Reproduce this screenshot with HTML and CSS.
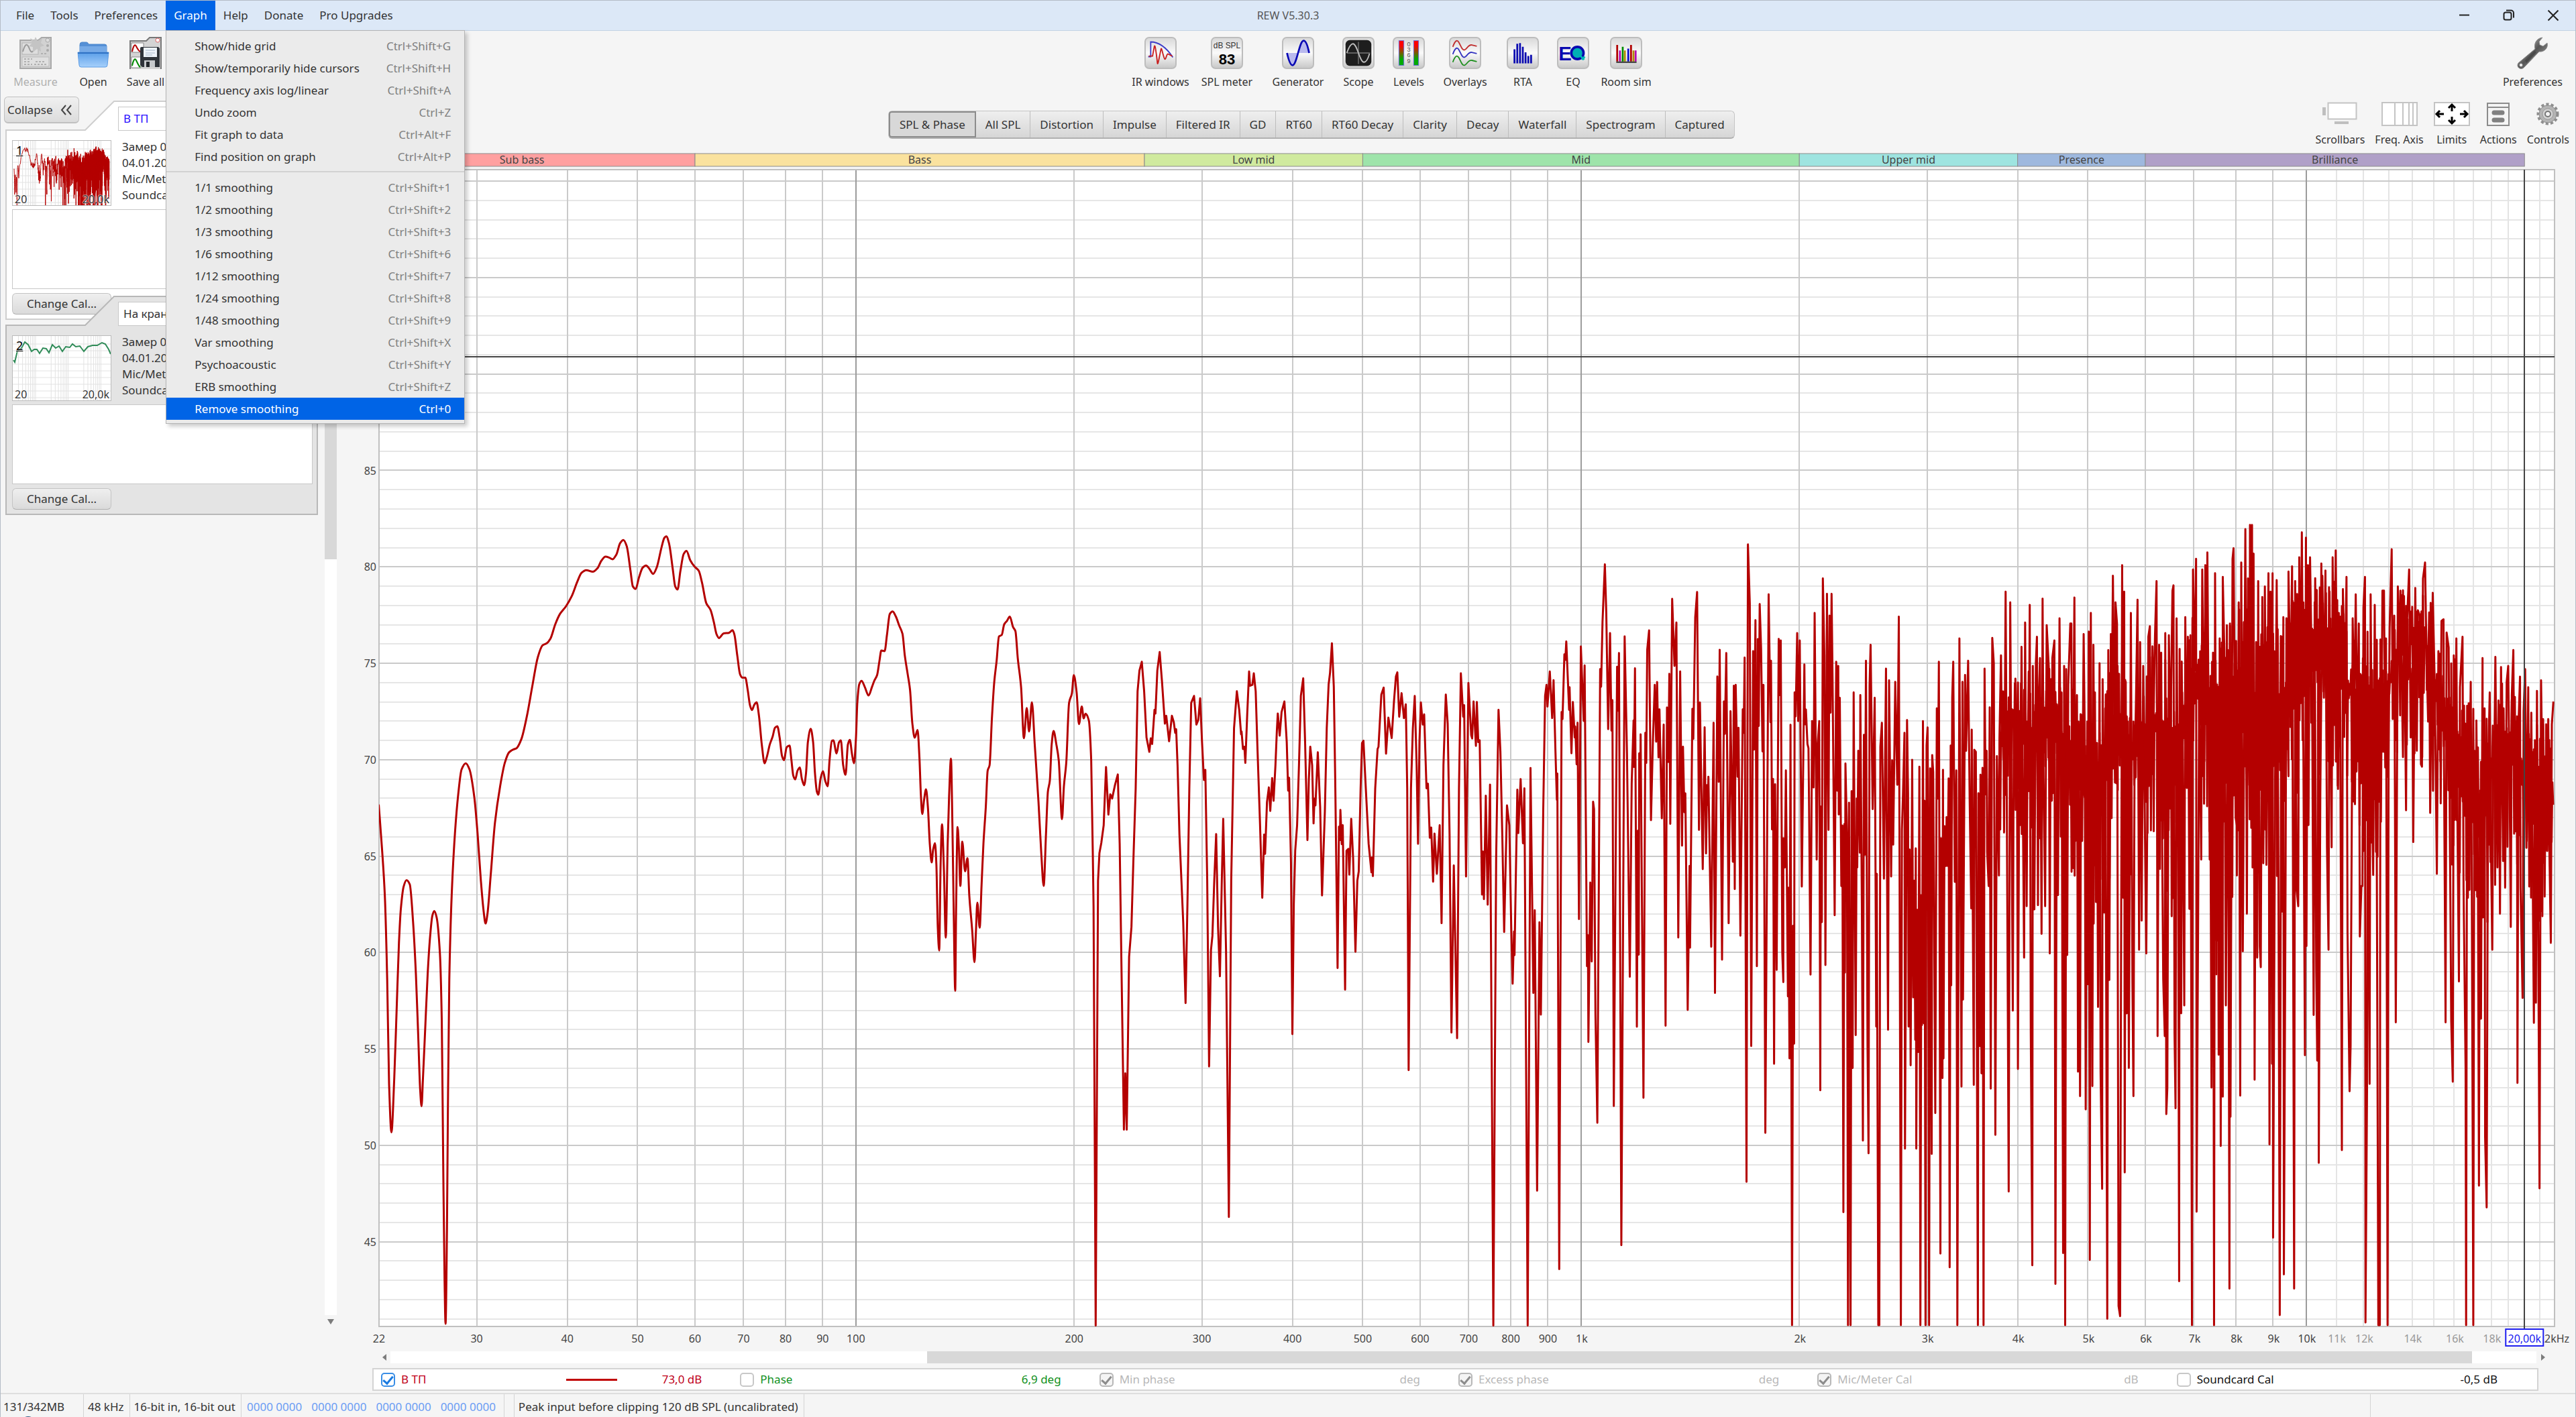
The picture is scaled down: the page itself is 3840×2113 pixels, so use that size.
FILE: index.html
```html
<!DOCTYPE html>
<html lang="en">
<head>
    <meta charset="UTF-8">
    <meta name="viewport" content="width=device-width, initial-scale=1.0">
    <title>REW V5.30.3</title>
    <link rel="stylesheet" href="styles.css">
</head>
<body>

    <header class="titlebar">
        <nav class="menubar">
            <button type="button">File</button>
            <button type="button">Tools</button>
            <button type="button">Preferences</button>
            <div class="menu-holder">
                <button type="button" class="open" aria-expanded="true">Graph</button>
                <ul class="menu" id="graphMenu">
                    <li><button type="button"><span>Show/hide grid</span><kbd>Ctrl+Shift+G</kbd></button></li>
                    <li><button type="button"><span>Show/temporarily hide cursors</span><kbd>Ctrl+Shift+H</kbd></button></li>
                    <li><button type="button"><span>Frequency axis log/linear</span><kbd>Ctrl+Shift+A</kbd></button></li>
                    <li><button type="button"><span>Undo zoom</span><kbd>Ctrl+Z</kbd></button></li>
                    <li><button type="button"><span>Fit graph to data</span><kbd>Ctrl+Alt+F</kbd></button></li>
                    <li><button type="button"><span>Find position on graph</span><kbd>Ctrl+Alt+P</kbd></button></li>
                    <li class="separator"></li>
                    <li><button type="button"><span>1/1 smoothing</span><kbd>Ctrl+Shift+1</kbd></button></li>
                    <li><button type="button"><span>1/2 smoothing</span><kbd>Ctrl+Shift+2</kbd></button></li>
                    <li><button type="button"><span>1/3 smoothing</span><kbd>Ctrl+Shift+3</kbd></button></li>
                    <li><button type="button"><span>1/6 smoothing</span><kbd>Ctrl+Shift+6</kbd></button></li>
                    <li><button type="button"><span>1/12 smoothing</span><kbd>Ctrl+Shift+7</kbd></button></li>
                    <li><button type="button"><span>1/24 smoothing</span><kbd>Ctrl+Shift+8</kbd></button></li>
                    <li><button type="button"><span>1/48 smoothing</span><kbd>Ctrl+Shift+9</kbd></button></li>
                    <li><button type="button"><span>Var smoothing</span><kbd>Ctrl+Shift+X</kbd></button></li>
                    <li><button type="button"><span>Psychoacoustic</span><kbd>Ctrl+Shift+Y</kbd></button></li>
                    <li><button type="button"><span>ERB smoothing</span><kbd>Ctrl+Shift+Z</kbd></button></li>
                    <li><button type="button" class="active"><span>Remove smoothing</span><kbd>Ctrl+0</kbd></button></li>
                </ul>
            </div>
            <button type="button">Help</button>
            <button type="button">Donate</button>
            <button type="button">Pro Upgrades</button>
        </nav>
        <h1>REW V5.30.3</h1>
        <div class="window-buttons">
            <button type="button" aria-label="Minimize"><svg width="18" height="18" viewBox="0 0 18 18"><path d="M1 8.500h15"/></svg></button>
            <button type="button" aria-label="Restore"><svg width="18" height="18" viewBox="0 0 18 18"><rect x="1.500" y="4.500" width="11" height="11" rx="2.500"/><path d="M5 1.500h7a4 4 0 0 1 4 4v7"/></svg></button>
            <button type="button" aria-label="Close"><svg width="18" height="18" viewBox="0 0 18 18"><path d="M1.500 1.500l15 15M16.500 1.500l-15 15"/></svg></button>
        </div>
    </header>

    <div class="toolbar">
        <div class="file-tools">
            <button type="button" class="tool" disabled>
                <svg width="48" height="48" viewBox="0 0 48 48"><path d="M1 5h27l5-4h14v46H1z" fill="#d2d2d2" stroke="#a8a8a8" stroke-width="2"/><rect x="4" y="9" width="24" height="17" fill="#dedede" stroke="#b4b4b4"/><path d="M5 22c4-14 7-12 10-4s6 4 9-4" fill="none" stroke="#9a9a9a" stroke-width="2"/><rect x="4" y="30" width="40" height="14" fill="#e0e0e0" stroke="#bbb"/><path d="M7 33h12M7 37h10M7 41h12M24 37h14M22 41h20M32 25h8" stroke="#b0b0b0" stroke-width="2" stroke-dasharray="3 2"/><path d="M24 0l3 6 7-4-2 7 5 4-6 2 1 7-6-4-6 5v-8l-6-1 5-5-3-7 6 3z" fill="#c4c4c4"/><circle cx="42" cy="5" r="3" fill="#ddd" stroke="#aaa"/><circle cx="42" cy="13" r="2" fill="#aaa"/><circle cx="42" cy="20" r="2" fill="#aaa"/></svg>
                <span>Measure</span>
            </button>
            <button type="button" class="tool">
                <svg width="48" height="48" viewBox="0 0 48 48"><path d="M4 12q0-4 3-4h7q2 0 3 3h24q3 0 3 3v12H4z" fill="#5590d6" stroke="#4b86cc"/><path d="M4 14h40v10H4z" fill="#76aae6"/><path d="M1 23h46l-2 19q0 3-3 3H6q-3 0-3-3z" fill="url(#folder)" stroke="#5c9be4"/><path d="M1 24h46" stroke="#2f72c4" stroke-width="2"/><defs><linearGradient id="folder" x2="0" y2="1"><stop offset="0" stop-color="#5a9ee8"/><stop offset="1" stop-color="#a6d0fb"/></linearGradient></defs></svg>
                <span>Open</span>
            </button>
            <button type="button" class="tool">
                <svg width="48" height="48" viewBox="0 0 48 48"><path d="M1 48V6h24l5-5h17v47" fill="#d4d4d4" stroke="#777" stroke-width="2"/><path d="M3 9h18v14H3zM3 30h14v16H3z" fill="#fff" stroke="#888"/><path d="M4 22c2-9 4-12 6-8s4 7 6 8" fill="none" stroke="#b40000" stroke-width="2"/><path d="M4 43c2-9 4-12 6-8s4 9 6 10" fill="none" stroke="#008a00" stroke-width="2"/><circle cx="42" cy="5" r="3" fill="#fff" stroke="#d66"/><path d="M16 17q0-2 2-2h25l2 2v28H19l-3-3z" fill="#2f343a"/><rect x="21" y="16" width="20" height="14" fill="#eef4fb"/><path d="M24 20h14M24 24h14M24 27h10" stroke="#a6b6c8"/><path d="M22 35h16v10H22z" fill="#c6c9cc"/><path d="M25 37h5v8h-5z" fill="#24282c"/></svg>
                <span>Save all</span>
            </button>
        </div>
        <div class="main-tools">
            <button type="button" class="tool">
                <svg class="tile" width="48" height="48" viewBox="0 0 48 48"><path d="M4 30h4V6c14 0 26 10 36 25" fill="none" stroke="#3c3cc8" stroke-width="2"/><path d="M5 29h6l3-16c1-2 2 2 5 28 1 4 5-22 6-24s4 16 6 17 3-11 6-8l6 3" fill="none" stroke="#c81e1e" stroke-width="2"/></svg>
                <span>IR windows</span>
            </button>
            <button type="button" class="tool">
                <svg class="tile" width="48" height="48" viewBox="0 0 48 48"><text x="24" y="16" class="meter-unit">dB SPL</text><text x="24" y="42" class="meter-value">83</text></svg>
                <span>SPL meter</span>
            </button>
            <button type="button" class="tool">
                <svg class="tile" width="48" height="48" viewBox="0 0 48 48"><path d="M6 24c3 13 6 20 9 20s6-8 9-20zM24 24c4-16 6-20 9-20s6 8 9 20z" fill="#b9b9ee"/><path d="M6 24c3 13 6 20 9 20 7 0 11-40 18-40 4 0 7 10 9 20" fill="none" stroke="#0a0ab4" stroke-width="3"/></svg>
                <span>Generator</span>
            </button>
            <button type="button" class="tool">
                <svg class="tile" width="48" height="48" viewBox="0 0 48 48"><rect x="3" y="3" width="42" height="42" rx="7" fill="#1e1e1e"/><path d="M5 24h38M24 6v36" stroke="#606060" stroke-width="2"/><path d="M5 24C9 13 12 9 15 9c7 0 11 30 18 30 4 0 7-7 9-14" fill="none" stroke="#bdbdbd" stroke-width="2"/></svg>
                <span>Scope</span>
            </button>
            <button type="button" class="tool">
                <svg class="tile" width="48" height="48" viewBox="0 0 48 48"><defs><linearGradient id="level" x2="0" y2="1"><stop offset=".2" stop-color="#f00"/><stop offset=".75" stop-color="#00aa00"/></linearGradient></defs><rect x="8" y="4" width="8" height="40" fill="url(#level)" stroke="#6666e0"/><rect x="32" y="4" width="8" height="40" fill="url(#level)" stroke="#6666e0"/><g class="level-text"><text x="24" y="13">0</text><text x="24" y="22">3</text><text x="24" y="31">6</text><text x="24" y="40">9</text></g></svg>
                <span>Levels</span>
            </button>
            <button type="button" class="tool">
                <svg class="tile" width="48" height="48" viewBox="0 0 48 48"><g fill="none" stroke-width="2"><path d="M4 14C8 3 11 2 14 7s5 13 9 12 6-9 12-8l8 2" stroke="#c03030"/><path d="M4 26C8 15 11 14 14 19s5 13 9 12 6-9 12-8l8 2" stroke="#3434c0"/><path d="M4 39C8 28 11 27 14 32s5 13 9 12 6-9 12-8l8 2" stroke="#209020"/></g></svg>
                <span>Overlays</span>
            </button>
            <button type="button" class="tool">
                <svg class="tile" width="48" height="48" viewBox="0 0 48 48"><path d="M10.500 41V18M15 41V9M19.500 41V8M24 41V14M28.500 41V23M33 41V29M37.500 41V27" stroke="#0a0ab0" stroke-width="3"/></svg>
                <span>RTA</span>
            </button>
            <button type="button" class="tool">
                <svg class="tile" width="48" height="48" viewBox="0 0 48 48"><circle cx="31" cy="24" r="10" fill="#00b0b4" stroke="#0a0ab0" stroke-width="4"/><path d="M36 29l6 6M38 35l5-5" stroke="#00b8b8" stroke-width="3"/><text x="11" y="36" class="eq-text">E</text></svg>
                <span>EQ</span>
            </button>
            <button type="button" class="tool">
                <svg class="tile" width="48" height="48" viewBox="0 0 48 48"><g stroke-width="3"><path d="M9.500 38V11M32 38V11" stroke="#b00000"/><path d="M14 38V20M39.500 38V20" stroke="#b400b4"/><path d="M18.500 38V14" stroke="#008a00"/><path d="M22 38V20M36 38V20" stroke="#b08a00"/><path d="M27.500 38V17" stroke="#0a0ac8"/></g><path d="M8 39h33" stroke="#333" stroke-width="2"/></svg>
                <span>Room sim</span>
            </button>
        </div>
        <div class="pref-tools">
            <button type="button" class="tool">
                <svg width="48" height="48" viewBox="0 0 48 48"><defs><linearGradient id="steel" x2="1" y2="1"><stop offset="0" stop-color="#eee"/><stop offset=".5" stop-color="#555"/><stop offset="1" stop-color="#bbb"/></linearGradient></defs><path d="M28 18c-2-8 2-16 11-17l-5 6 1 5 5 2 6-5c2 8-5 14-12 13L12 45c-5 6-13 0-9-6z" fill="url(#steel)" stroke="#8a8a8a"/><path d="M13 35l14-14 3 2-15 16z" fill="#4a4a4a"/><circle cx="7" cy="42" r="2.500" fill="#f5f5f5" stroke="#777"/></svg>
                <span>Preferences</span>
            </button>
        </div>
    </div>

    <div class="workspace">
        <aside class="sidebar">
            <div class="measurements">
                <button type="button" class="collapse">Collapse <svg width="18" height="16" viewBox="0 0 18 16"><path d="M8 1L2 8l6 7M16 1l-6 7 6 7"/></svg></button>

                <section class="card selected">
                    <svg class="card-shape" width="466" height="327" viewBox="0 0 466 327"><path d="M1 326V44H119L162 1H465V326z"/></svg>
                    <input class="card-title" type="text" value="В ТП" aria-label="Measurement 1 name">
                    <div class="card-info">
                        <div class="thumb">
                            <svg id="thumbTrace" width="146" height="96" viewBox="0 0 146 96"></svg>
                            <b>1</b><i class="low">20</i><i class="high">20,0k</i>
                        </div>
                        <p>Замер 04<br>04.01.20<br>Mic/Meter<br>Soundcard</p>
                    </div>
                    <textarea aria-label="Measurement 1 notes"></textarea>
                    <button type="button" class="change-cal">Change Cal...</button>
                </section>

                <section class="card">
                    <svg class="card-shape" width="466" height="327" viewBox="0 0 466 327"><path d="M1 326V44H119L162 1H465V326z"/></svg>
                    <input class="card-title" type="text" value="На кран" aria-label="Measurement 2 name">
                    <div class="card-info">
                        <div class="thumb">
                            <svg id="thumbGreen" width="146" height="96" viewBox="0 0 146 96"><polyline points="1,36 3,39 7,22 13,18 18,9 23,13 28,23 32,20 36,20 40,26 45,18 50,19 54,25 59,13 64,18 69,15 74,23 79,16 85,17 89,12 94,16 100,15 106,23 112,16 119,14 126,14 133,10 138,12 143,20 146,27"/></svg>
                            <b>2</b><i class="low">20</i><i class="high">20,0k</i>
                        </div>
                        <p>Замер 04<br>04.01.20<br>Mic/Meter<br>Soundcard</p>
                    </div>
                    <textarea aria-label="Measurement 2 notes"></textarea>
                    <button type="button" class="change-cal">Change Cal...</button>
                </section>
            </div>
            <div class="vscroll">
                <div class="vtrack"><div class="vthumb"></div></div>
                <svg width="18" height="18" viewBox="0 0 18 18"><path d="M4 6h10l-5 8z"/></svg>
            </div>
        </aside>

        <main class="graph-area">
            <div class="graph-header">
                <div class="tabs">
                    <button type="button" class="current">SPL &amp; Phase</button>
                    <button type="button">All SPL</button>
                    <button type="button">Distortion</button>
                    <button type="button">Impulse</button>
                    <button type="button">Filtered IR</button>
                    <button type="button">GD</button>
                    <button type="button">RT60</button>
                    <button type="button">RT60 Decay</button>
                    <button type="button">Clarity</button>
                    <button type="button">Decay</button>
                    <button type="button">Waterfall</button>
                    <button type="button">Spectrogram</button>
                    <button type="button">Captured</button>
                </div>
                <div class="view-tools">
                    <button type="button" class="tool">
                        <svg width="54" height="38" viewBox="0 0 54 38"><path d="M9.500 2.500h42v24h-42z" fill="#fff" stroke="#c4c4c4" stroke-width="2"/><path d="M1 9h5v12H1zM19 30h21v4H19z" fill="#bfbfbf"/></svg>
                        <span>Scrollbars</span>
                    </button>
                    <button type="button" class="tool">
                        <svg width="54" height="38" viewBox="0 0 54 38"><path d="M1 2h52v34H1zM20 2v34M32 2v34M41 2v34M47 2v34" fill="#fff" stroke="#c4c4c4" stroke-width="2"/></svg>
                        <span>Freq. Axis</span>
                    </button>
                    <button type="button" class="tool">
                        <svg width="54" height="38" viewBox="0 0 54 38"><path d="M1 2h52v34H1z" fill="#fff" stroke="#c4c4c4" stroke-width="2"/><path d="M15 19H5M9 14l-5 5 5 5M39 19h10M45 14l5 5-5 5M27 15V6M22 10l5-5 5 5M27 23v9M22 28l5 5 5-5" fill="none" stroke="#000" stroke-width="3"/></svg>
                        <span>Limits</span>
                    </button>
                    <button type="button" class="tool">
                        <svg width="36" height="38" viewBox="0 0 36 38"><path d="M2 3h32v33H2zM2 9h32" fill="#f5f5f5" stroke="#8c8c8c" stroke-width="2"/><path d="M12 17h12M12 28h12" stroke="#808080" stroke-width="7" stroke-linecap="round"/></svg>
                        <span>Actions</span>
                    </button>
                    <button type="button" class="tool">
                        <svg width="38" height="38" viewBox="0 0 38 38"><circle cx="19" cy="19" r="14" fill="none" stroke="#8e8e8e" stroke-width="5" stroke-dasharray="4 3"/><circle cx="19" cy="19" r="13" fill="#b4b4b4" stroke="#8e8e8e"/><circle cx="19" cy="19" r="8" fill="#d4d4d4" stroke="#9a9a9a"/><circle cx="19" cy="19" r="4" fill="#f5f5f5" stroke="#777" stroke-width="2"/></svg>
                        <span>Controls</span>
                    </button>
                </div>
            </div>

            <svg class="chart" id="chart" role="img" aria-label="SPL graph"></svg>

            <div class="hscroll">
                <svg width="18" height="18" viewBox="0 0 18 18"><path d="M12 4v10L6 9z"/></svg>
                <div class="htrack"><div class="hthumb"></div></div>
                <svg width="18" height="18" viewBox="0 0 18 18"><path d="M7 4v10l6-5z"/></svg>
            </div>

            <div class="legend">
                <div class="trace red"><label><input type="checkbox" checked>В ТП</label><span class="swatch"></span><span class="value">73,0 dB</span></div>
                <div class="trace green"><label><input type="checkbox">Phase</label><span class="value">6,9 deg</span></div>
                <div class="trace off"><label><input type="checkbox" checked disabled>Min phase</label><span class="value">deg</span></div>
                <div class="trace off"><label><input type="checkbox" checked disabled>Excess phase</label><span class="value">deg</span></div>
                <div class="trace off"><label><input type="checkbox" checked disabled>Mic/Meter Cal</label><span class="value">dB</span></div>
                <div class="trace"><label><input type="checkbox">Soundcard Cal</label><span class="value">-0,5 dB</span></div>
            </div>
        </main>
    </div>

    <footer class="statusbar">
        <span class="memory">131/342MB</span>
        <span>48 kHz</span>
        <span>16-bit in, 16-bit out</span>
        <span class="channels"><em>0000 0000</em><em>0000 0000</em><em>0000 0000</em><em>0000 0000</em></span>
        <span class="spacer"></span>
        <span>Peak input before clipping 120 dB SPL (uncalibrated)</span>
        <span class="rest"></span>
    </footer>

    <script src="script.js"></script>
</body>
</html>
```

FILE: styles.css
```css
* {
    box-sizing: border-box;
}

body {
    margin: 0;
    height: 100vh;
    display: flex;
    flex-direction: column;
    font-family: "Noto Sans", "Open Sans", sans-serif;
    font-size: 17px;
    line-height: 22px;
    color: #333;
    background: #f5f5f5;
    border: 1px solid #b4bcc6;
    border-bottom: none;
}

button, input, textarea {
    font: inherit;
    color: inherit;
}

button {
    margin: 0;
    padding: 0;
    border: none;
    background: none;
}

/* Title bar and menus */
.titlebar {
    display: grid;
    grid-template-columns: 1fr auto 1fr;
    align-items: center;
    height: 45px;
    background: #dce8f7;
    border-bottom: 1px solid #c3d3e4;
}

.titlebar h1 {
    margin: 0;
    font-size: 16px;
    font-weight: normal;
    color: #555;
}

.menubar {
    display: flex;
    height: 44px;
    padding-left: 11px;
}

.menubar > button, .menu-holder > button {
    height: 44px;
    padding: 0 12px;
}

.menu-holder {
    position: relative;
}

.menubar .open {
    background: #0064e6;
    color: #fff;
}

.menu {
    position: absolute;
    top: 44px;
    left: 0;
    z-index: 10;
    width: 446px;
    margin: 0;
    padding: 6px 0 5px;
    list-style: none;
    background: #ebebeb;
    border: 1px solid #b4b4b4;
    box-shadow: 4px 4px 6px rgba(0, 0, 0, 0.2);
}

.menu button {
    display: flex;
    justify-content: space-between;
    align-items: center;
    width: 100%;
    height: 33px;
    padding: 0 20px 0 42px;
}

.menu kbd {
    font-family: inherit;
    font-size: 17px;
    color: #808080;
}

.menu .active, .menu .active kbd {
    background: #0064e6;
    color: #fff;
}

.menu .separator {
    height: 13px;
    padding-top: 5px;
}

.menu .separator::before {
    content: "";
    display: block;
    height: 2px;
    background: #d2d2d2;
}

.window-buttons {
    display: flex;
    justify-content: flex-end;
    gap: 48px;
    padding-right: 24px;
}

.window-buttons button {
    height: 18px;
    line-height: 0;
}

.window-buttons svg {
    fill: none;
    stroke: #222;
    stroke-width: 2;
}

/* Toolbar */
.toolbar {
    display: flex;
    height: 94px;
    padding-top: 9px;
}

.tool {
    display: flex;
    flex-direction: column;
    align-items: center;
    gap: 8px;
    font-size: 16px;
    white-space: nowrap;
}

.tool:disabled {
    color: #b0b0b0;
}

.tile {
    border: 2px solid #bdbdbd;
    border-radius: 7px;
    background: linear-gradient(#d9d9d9, #fafafa 50%, #c9c9c9);
}

.meter-unit, .meter-value, .level-text, .eq-text {
    font-family: "Liberation Sans", sans-serif;
}

.meter-unit {
    font-size: 13px;
    text-anchor: middle;
    fill: #333;
}

.meter-value {
    font-size: 24px;
    font-weight: bold;
    text-anchor: middle;
    fill: #000;
}

.level-text {
    font-size: 10px;
    text-anchor: middle;
    fill: #555;
}

.eq-text {
    font-size: 32px;
    font-weight: bold;
    text-anchor: middle;
    fill: #0a0ab0;
}

.file-tools {
    display: grid;
    grid-template-columns: 88px 84px 72px;
    justify-content: start;
    align-items: start;
    width: 446px;
    padding-left: 8px;
}

.main-tools {
    flex: 1;
    display: grid;
    grid-template-columns: 104px 94px 118px 62px 88px 80px 92px 58px 100px;
    justify-content: center;
    align-items: start;
}

.pref-tools {
    display: flex;
    justify-content: flex-end;
    align-items: flex-start;
    width: 134px;
    padding-right: 19px;
}

/* Measurements list */
.workspace {
    flex: 1;
    display: flex;
    min-height: 0;
}

.sidebar {
    flex: none;
    display: flex;
    justify-content: space-between;
    width: 501px;
    padding: 4px 0 98px;
}

.measurements {
    width: 473px;
    padding-left: 7px;
}

.collapse {
    display: flex;
    align-items: center;
    justify-content: space-between;
    width: 112px;
    height: 40px;
    margin: 0 0 2px -2px;
    padding: 0 9px 0 4px;
    border: 1px solid #c0c0c0;
    border-bottom-width: 2px;
    border-radius: 6px;
    background: linear-gradient(#f0f0f0, #dcdcdc);
}

.collapse svg {
    fill: none;
    stroke: #444;
    stroke-width: 2;
}

.card {
    position: relative;
    display: flex;
    flex-direction: column;
    align-items: flex-start;
    width: 466px;
    height: 327px;
    margin-top: -36px;
    padding: 9px 8px 8px 10px;
}

.card-shape {
    position: absolute;
    top: 0;
    left: 0;
    fill: #e4e4e4;
    stroke: #b8b8b8;
    stroke-width: 2;
}

.selected .card-shape {
    fill: #fff;
    stroke: #cfcfcf;
}

.card > *:not(.card-shape) {
    position: relative;
}

.card-title {
    align-self: flex-end;
    width: 290px;
    height: 36px;
    padding: 0 7px;
    border: 1px solid #c8c8c8;
    background: #fff;
}

.selected .card-title {
    color: #2a10ff;
}

.card-info {
    display: flex;
    gap: 16px;
    height: 98px;
    margin-top: 14px;
}

.card-info p {
    margin: -2px 0 0;
    line-height: 24px;
    white-space: nowrap;
}

.thumb {
    position: relative;
    width: 148px;
    height: 98px;
    border: 1px solid #bbb;
    background: #fff;
}

.thumb svg {
    display: block;
    fill: none;
}

.thumb b {
    position: absolute;
    top: 3px;
    left: 5px;
    font-weight: normal;
    font-size: 18px;
    text-decoration: underline;
    text-shadow: 0 0 2px #fff, 0 0 2px #fff;
    color: #000;
}

.thumb i {
    position: absolute;
    bottom: -2px;
    font-style: normal;
    font-size: 16px;
    text-shadow: 0 0 2px #fff, 0 0 2px #fff;
}

.thumb .low {
    left: 3px;
}

.thumb .high {
    right: 2px;
}

#thumbTrace > path {
    stroke: #b40000;
    stroke-linejoin: round;
}

#thumbGreen polyline {
    stroke: #2e8b57;
    stroke-width: 2;
}

.thumb .thumb-grid {
    stroke: #e2e2e2;
}

.card textarea {
    width: 448px;
    height: 120px;
    margin: 5px 0 6px;
    border: 1px solid #c8c8c8;
    background: #fff;
    resize: none;
}

.change-cal {
    width: 148px;
    height: 32px;
    border: 1px solid #c4c4c4;
    border-bottom-color: #b0b0b0;
    border-radius: 6px;
    background: linear-gradient(#efefef, #dadada);
}

.vscroll {
    display: flex;
    flex-direction: column;
    width: 18px;
}

.vtrack {
    flex: 1;
    background: #fff;
}

.vthumb {
    height: 38%;
    background: #d8d8d8;
}

.vscroll svg, .hscroll svg {
    flex: none;
    fill: #7c7c7c;
}

/* Graph */
.graph-area {
    flex: 1;
    display: flex;
    flex-direction: column;
    min-width: 0;
}

.graph-header {
    display: flex;
    align-items: flex-start;
    height: 84px;
}

.tabs {
    display: flex;
    height: 42px;
    margin: 25px auto 0;
    border: 1px solid #c4c4c4;
    border-bottom: 2px solid #b0b0b0;
    border-radius: 6px;
    background: linear-gradient(#efefef, #d6d6d6);
}

.tabs button {
    padding: 0 14px;
    border-right: 1px solid #bdbdbd;
}

.tabs button:last-child {
    border-right: none;
}

.tabs .current {
    background: #d8d8d8;
    border: 2px solid #8c8c8c;
    border-radius: 4px 0 0 4px;
}

.view-tools {
    display: flex;
    gap: 15px;
    margin-left: 44px;
    padding: 11px 9px 0 0;
}

.chart {
    flex: 1;
    display: block;
    width: 100%;
    min-height: 0;
}

.axis-label {
    font-size: 16px;
    text-anchor: middle;
    fill: #444;
}

.axis-label.left {
    text-anchor: end;
}

.axis-label.minor {
    fill: #999;
}

.axis-label.cursor {
    fill: #2020f0;
}

.curve {
    fill: none;
    stroke: #b40000;
    stroke-width: 3;
    stroke-linejoin: round;
}

.hscroll {
    display: flex;
    margin: 3px 40px 0 62px;
}

.htrack {
    flex: 1;
    height: 18px;
    background: #fff;
}

.hthumb {
    width: 72%;
    height: 18px;
    margin-left: 25%;
    background: #d8d8d8;
}

.legend {
    display: grid;
    grid-template-columns: repeat(6, 1fr);
    align-items: center;
    height: 34px;
    margin: 7px 55px 3px 53px;
    padding: 0 2px 0 11px;
    border: 2px solid #d4d4d4;
    background: #fff;
}

.trace {
    display: flex;
    align-items: center;
    padding-right: 57px;
    color: #111;
}

.trace label {
    display: flex;
    align-items: center;
    gap: 9px;
    width: 276px;
}

.trace .value {
    margin-left: auto;
}

.trace.red {
    color: #c00018;
}

.trace.green {
    color: #109020;
}

.trace.off {
    color: #b8b8b8;
}

.swatch {
    width: 76px;
    height: 3px;
    background: #c00000;
}

.trace input {
    appearance: none;
    display: grid;
    place-items: center;
    width: 21px;
    height: 21px;
    margin: 0;
    border: 2px solid #c8c8c8;
    border-radius: 5px;
    background: #fff;
}

.trace input:checked {
    border-color: #3a8ee6;
}

.trace input:checked::after {
    content: "";
    width: 6px;
    height: 12px;
    margin-bottom: 3px;
    border: solid #1a7ae0;
    border-width: 0 3px 3px 0;
    transform: rotate(40deg);
}

.trace input:disabled {
    border-color: #b8b8b8;
    background: #f4f4f4;
}

.trace input:disabled::after {
    border-color: #8c8c8c;
}

/* Status bar */
.statusbar {
    position: relative;
    display: flex;
    height: 36px;
    padding-right: 305px;
    border-top: 2px solid #dedede;
    line-height: 37px;
    white-space: nowrap;
    overflow: hidden;
}

.statusbar > span {
    padding: 0 8px 0 6px;
    border-right: 1px solid #d4d4d4;
}

.statusbar .memory {
    width: 124px;
    padding-left: 4px;
}

.statusbar .channels {
    display: flex;
    gap: 14px;
    padding: 0 12px 0 8px;
    color: #6a9cf4;
}

.statusbar .channels em {
    font-style: normal;
}

.statusbar .spacer {
    width: 15px;
    padding: 0;
}

.statusbar .rest {
    flex: 1;
}

.statusbar::after {
    content: "";
    position: absolute;
    top: 33px;
    left: 30px;
    width: 18px;
    height: 18px;
    border: 2px solid #2c5a80;
    border-radius: 50%;
}
```

FILE: script.js
```js
const svgNS = 'http://www.w3.org/2000/svg';
const fMin = 22, fMax = 22000;
const dbTop = 100.6, dbBottom = 40.6;
const margin = { top: 29, right: 31, bottom: 34, left: 63 };

const bands = [
    ['Sub bass', 20, 60, '#ffa0a0'],
    ['Bass', 60, 250, '#fae29e'],
    ['Low mid', 250, 500, '#d0ea9e'],
    ['Mid', 500, 2000, '#9ee4aa'],
    ['Upper mid', 2000, 4000, '#9ee4e0'],
    ['Presence', 4000, 6000, '#9eb8de'],
    ['Brilliance', 6000, 20000, '#b0a0c8']
];

// Trace samples: x and y steps counted from (x0, y0), kx and ky steps per plot unit.
// The whole plot is 3243 x 1725 units.
const parts = [
    { x0: -25, y0: 507, kx: 1.4255, ky: 1.285, smooth: true, data: `35,565 42,650 48,740 53,900 57,1100 62,1193 68,1090 73,960 78,830 82,765 88,722 94,710 101,718 108,790 114,890 119,1010 123,1110 126,1143 129,1090 134,990 139,890 144,820 149,778 153,769 158,781 165,850 169,980 172,1250 175,1480 177,1560 180,1380 182,1150 185,900 190,740 197,620 204,545 211,498 220,486 228,498 238,550 245,620 252,710 258,770 262,793 266,775 273,700 282,600 293,530 303,485 312,465 320,460 328,457 338,440 350,395 362,335 373,283 383,260 392,256 400,247 410,220 420,200 433,185 445,166 457,138 466,121 476,116 490,119 500,112 508,98 517,90 525,92 532,95 540,86 548,64 555,58 562,70 570,117 575,147 581,152 588,130 596,111 603,107 610,113 618,123 626,110 636,72 642,54 646,51 652,65 660,115 665,147 670,153 676,118 683,85 689,79 697,97 706,109 715,117 722,140 731,179 740,192 747,215 753,239 758,246 768,237 779,236 787,231 791,240 797,280 803,316 808,322 814,322 819,345 824,375 828,384 833,374 838,369 843,395 849,450 855,486 860,473 866,450 872,435 877,418 882,415 887,437 892,472 896,480 902,455 908,452 912,480 916,510 920,517 925,500 930,494 934,515 939,528 943,505 947,445 953,420 958,445 962,505 966,540 969,546 974,515 979,501 984,520 989,530 993,480 998,443 1001,442 1008,467 1013,446 1017,442 1022,490 1027,508 1032,450 1036,441 1041,470 1045,486 1049,440 1052,370 1056,335 1061,328 1068,340 1076,356 1083,340 1088,328 1094,317 1099,290 1103,270 1110,271 1115,240 1121,200 1127,195 1134,205 1141,222 1148,238 1153,280 1159,315 1164,345 1169,410 1174,437 1180,422 1184,475 1187,545 1190,583 1194,555 1198,536 1202,570 1206,640 1210,676 1213,652 1217,639 1220,680 1223,800 1226,845 1229,680 1232,603 1236,690 1240,820 1244,640 1247,550 1251,477 1254,600 1257,780 1260,922 1262,760 1265,608 1268,650 1271,721 1275,636 1281,693 1286,668 1290,740 1296,805 1301,867 1304,810 1307,753 1312,801 1316,720 1320,640 1325,570 1329,500 1333,490 1338,400 1343,330 1348,290 1353,243 1359,240 1364,220 1370,213 1376,205 1383,225 1388,233 1393,285 1400,340 1406,438 1412,380 1417,425 1423,369 1429,450 1437,560 1443,660 1448,721 1453,620 1457,540 1461,520 1465,450 1469,424 1475,450 1480,480 1487,593 1491,530 1496,485 1502,370 1508,352 1512,317 1518,350 1523,411 1529,377 1533,400 1537,391 1544,404 1549,480 1554,760` },
    { x0: 1015, y0: 647, kx: 1.4255, ky: 1.4519, data: `76,1563 81,600 84,540 88,518 93,480 98,354 103,457 107,413 111,422 117,393 123,370 127,520 131,800 136,1139 139,1017 142,1139 147,765 152,700 156,560 161,400 165,190 169,145 174,126 179,190 184,290 190,321 193,292 196,304 201,230 203,238 207,145 212,105 217,170 223,260 226,243 232,298 238,243 242,257 245,280 247,272 250,350 254,500 262,690 267,865 271,650 275,400 279,215 285,200 290,262 294,252 298,205 302,300 306,382 309,360 313,600 317,1002 321,750 324,720 328,600 332,499 336,700 340,807 344,600 347,466 353,750 359,1328 364,600 370,270 376,190 381,230 385,283 386,277 389,315 392,310 394,345 398,240 402,147 404,178 409,176 412,151 416,190 420,320 425,470 430,637 434,500 436,542 440,430 444,398 447,449 451,378 454,427 458,350 461,275 463,238 467,286 471,235 477,212 482,300 485,405 487,377 491,560 494,932 497,650 500,535 504,480 508,350 512,200 517,162 521,300 526,512 529,380 532,310 536,350 539,476 541,422 543,437 548,322 553,440 557,632 563,450 567,270 571,175 574,150 578,86 582,180 585,380 590,789 593,483 595,512 596,447 599,521 601,480 606,836 609,535 613,531 615,587 619,466 623,550 628,754 632,600 635,580 639,400 642,302 645,297 650,400 656,520 662,582 663,550 665,590 670,400 675,315 677,310 683,197 688,182 690,240 693,325 698,247 705,291 710,210 714,158 717,149 721,245 726,194 731,248 735,218 738,400 741,1010 746,400 750,270 754,200 758,350 761,520 764,300 767,214 771,262 774,240 779,400 782,390 786,507 789,485 793,602 796,498 801,585 807,480 811,692 815,350 820,197 824,260 828,500 832,929 837,567 844,941 848,400 852,151 857,245 859,220 863,591 868,172 874,285 876,292 879,212 884,308 886,213 889,300 892,296 897,630 899,537 901,640 905,416 909,652 914,392 921,1563 927,550 932,230 936,320 940,500 944,711 950,437 955,480 959,700 962,823 965,710 966,761 968,640 972,403 974,497 979,380 984,519 987,400 994,1563 1000,356 1006,843 1009,664 1014,1271 1019,690 1022,890 1027,450 1031,200 1034,176 1036,223 1041,147 1046,248 1049,166 1053,320 1056,425 1057,368 1061,1441 1066,235 1068,250 1072,110 1074,122 1076,82 1082,230 1083,181 1087,324 1090,213 1094,290 1095,266 1098,348 1100,258 1103,683 1107,93 1113,254 1115,134 1120,785 1122,718 1123,949 1127,604 1130,775 1133,429 1135,445 1138,890 1142,1124 1148,142 1150,180 1153,40 1158,-85 1161,20 1165,272 1169,64 1172,275 1174,209 1177,1088 1184,137 1186,232 1188,107 1193,1389 1200,71 1205,325 1211,808 1215,390 1219,253 1220,354 1222,140 1226,916 1228,492 1230,760 1231,324 1233,416 1234,283 1240,1070 1244,280 1246,345 1248,100 1252,58 1256,469 1260,300 1264,176 1267,299 1269,170 1272,333 1274,229 1279,465 1283,262 1287,914 1290,225 1293,343 1295,152 1297,477 1301,-10 1306,135 1310,41 1314,723 1318,147 1322,524 1324,310 1327,452 1329,411 1334,880 1338,568 1339,745 1344,228 1346,293 1350,30 1354,-25 1358,490 1360,214 1366,575 1370,268 1373,541 1375,393 1377,436 1378,375 1384,743 1389,258 1392,843 1397,158 1400,386 1402,100 1407,771 1411,212 1413,282 1416,107 1421,692 1425,233 1430,559 1432,178 1434,618 1436,176 1440,375 1442,269 1446,719 1451,229 1453,280 1455,117 1459,1252 1462,-128 1466,0 1469,958 1473,103 1475,316 1478,36 1481,785 1483,77 1485,265 1487,1 1490,97 1493,320 1495,176 1499,1146 1506,-20 1510,257` },
    { x0: 2075, y0: 487, kx: 1.3067, ky: 1.2645, data: `0,310 2,628 4,533 6,1070 8,543 11,893 15,269 17,375 19,272 22,860 24,916 24,645 27,700 29,517 33,943 34,738 36,1060 38,431 41,1563 43,810 45,1032 46,370 48,415 51,258 53,424 56,272 60,736 65,317 66,430 68,402 71,467 73,475 74,567 77,902 80,424 83,549 85,220 89,685 91,466 94,424 96,1120 97,585 99,803 101,155 104,300 106,884 109,184 112,629 114,225 116,408 118,184 120,350 124,790 127,312 129,555 131,320 132,600 134,380 137,735 139,621 141,1350 143,618 144,898 145,504 148,636 150,1563 152,578 155,1563 157,556 159,1078 161,370 165,1016 167,570 168,700 170,480 173,672 174,375 177,773 179,1215 181,450 183,676 185,310 188,1036 190,1239 192,357 194,280 198,590 202,380 205,1000 206,712 209,1563 211,1563 213,472 216,427 220,721 224,325 225,557 228,1006 230,347 234,717 236,498 238,657 242,350 246,544 249,227 253,1563 255,628 257,565 260,446 261,1230 265,422 267,560 268,1000 270,666 272,1073 275,497 277,945 279,725 281,1025 282,664 283,1230 285,780 287,1048 289,510 291,1563 293,752 294,997 296,424 298,994 299,574 301,1563 303,470 305,436 306,600 308,1563 310,513 313,1240 314,488 316,520 320,1163 323,400 325,570 327,312 330,1428 331,645 334,1097 335,516 336,1060 338,622 341,697 342,605 344,697 346,532 348,1454 350,470 351,922 353,380 355,312 358,727 361,517 363,1563 367,268 371,1113 373,350 374,949 378,337 380,480 384,310 387,575 390,777 391,440 395,1110 396,478 399,482 403,1563 404,560 407,1037 408,525 410,1088 412,512 414,1563 416,325 418,562 420,480 421,670 424,735 426,398 428,1117 431,267 434,315 437,1204 440,490 444,715 445,456 448,300 450,471 452,368 454,634 457,180 459,510 463,1311 466,200 471,970 473,405 475,547 476,344 479,440 481,1080 484,405 486,620 488,284 493,870 495,238 498,773 500,427 502,556 504,205 506,1008 509,1450 510,320 513,779 516,313 518,265 520,771 522,370 524,305 527,825 529,193 531,533 534,773 537,243 541,320 543,862 545,345 547,574 548,305 552,272 554,1485 557,395 559,752 562,230 564,500 566,370 569,1427 571,320 573,1563 575,430 577,865 579,355 583,240 585,240 587,687 591,191 593,650 596,375 598,1085 599,425 602,1131 604,412 606,650 609,260 611,430 613,1156 616,425 617,920 619,255 621,1440 623,220 626,1112 628,280 630,600 631,370 633,765 635,465 637,963 640,315 642,1085 645,1306 646,345 649,785 651,400 653,950 655,1551 657,290 659,912 662,260 663,485 666,150 670,540 671,200 674,240 677,1527 680,1546 684,130 686,757 688,180 689,1275 691,350 693,975 695,425 697,1078 701,220 704,913 706,1131 708,540 711,380 714,195 717,855 719,275 722,800 725,320 728,600 731,862 733,600 735,265 738,245 740,630 743,283 745,430 748,262 751,160 753,1018 756,280 758,612 760,295 762,668 764,910 767,1018 768,258 770,1165 772,1116 775,262 778,462 782,178 784,168 786,1012 788,1154 790,230 793,660 795,1480 796,288 799,975 801,370 805,960 807,228 810,550 812,265 815,778 817,262 820,1563 822,138 825,328 828,118 829,1349 832,800 834,360 838,685 840,138 844,500 846,130 848,430 850,106 854,632 856,580 858,1115 861,295 863,1563 865,145 868,838 870,410 872,1053 874,268 876,1225 878,400 880,1132 880,152 883,290 886,960 890,290 893,1494 894,240 895,1170 899,118 901,98 905,606 909,630 911,200 914,1130 916,125 919,858 924,62 927,787 929,155 932,545 933,54 935,300 937,54 938,700 940,108 942,1100 945,275 947,870 949,160 952,848 954,888 957,190 959,692 962,170 965,695 969,145 971,1222 973,180 976,1070 977,145 978,1398 982,530 985,158 988,590 991,1544 994,285 996,783 998,228 999,1467 1002,810 1004,230 1008,528 1008,142 1012,380 1015,132 1019,1494 1021,160 1024,743 1027,773 1029,115 1032,390 1034,68 1037,480 1040,1054 1042,78 1043,848 1046,130 1047,620 1050,115 1054,365 1057,978 1059,200 1062,892 1064,1064 1066,240 1067,1257 1070,560 1074,150 1077,380 1080,140 1083,662 1086,855 1088,180 1092,662 1094,115 1097,370 1100,102 1104,546 1108,250 1110,725 1112,1233 1114,175 1118,360 1121,152 1123,823 1127,1122 1129,1036 1132,485 1133,230 1136,400 1139,185 1142,465 1145,240 1147,830 1150,735 1152,735 1154,210 1157,152 1158,1558 1161,1120 1163,340 1166,1108 1168,185 1171,590 1173,714 1176,205 1178,556 1180,680 1183,1563 1186,1563 1187,270 1188,614 1191,178 1194,178 1196,432 1198,268 1201,1563 1203,500 1205,248 1209,100 1211,420 1214,225 1217,992 1219,614 1221,170 1224,305 1226,178 1231,492 1233,188 1237,592 1239,235 1243,138 1246,455 1249,325 1251,652 1255,173 1258,480 1260,215 1264,225 1266,505 1268,510 1270,155 1274,125 1277,310 1280,425 1282,262 1284,597 1286,400 1289,182 1293,360 1297,712 1300,292 1304,500 1306,235 1310,232 1311,514 1314,992 1316,257 1320,285 1322,585 1325,990 1328,1104 1330,300 1332,610 1335,268 1337,600 1340,915 1342,360 1347,265 1349,738 1353,1080 1354,1563 1356,395 1359,655 1363,350 1365,715 1368,1563 1370,480 1373,743 1374,423 1377,710 1379,1300 1381,555 1383,985 1386,305 1387,794 1390,400 1391,1208 1394,1341 1396,750 1398,460 1400,370 1403,710 1405,855 1407,445 1409,480 1411,303 1415,700 1417,385 1420,787 1422,322 1426,688 1427,400 1430,738 1433,350 1436,320 1439,570 1441,812 1443,375 1446,290 1448,570 1450,632 1453,415 1454,1106 1456,430 1459,340 1460,738 1464,946 1466,405 1469,326 1472,650 1475,360 1477,736 1481,408 1483,630 1486,993 1488,460 1490,955 1492,367 1494,740 1497,1305 1500,347 1503,565 1504,430 1507,755 1509,495 1512,669 1514,420 1516,655 1519,842 1521,430 1524,387` }
];

// Where the samples lie closer than a pixel: x, top and bottom of the filled core
const core = [
    [445, 430, 465], [490, 420, 480], [530, 370, 480], [560, 400, 490], [600, 440, 580], [640, 470, 640], [662, 410, 520],
    [675, 350, 500], [700, 460, 540], [720, 400, 470], [750, 370, 480], [770, 400, 640], [800, 400, 520], [812, 310, 330],
    [850, 310, 400], [860, 400, 860], [885, 310, 560], [900, 300, 600], [925, 280, 440], [940, 340, 600], [975, 310, 540],
    [1000, 350, 540], [1010, 230, 380], [1045, 210, 370], [1100, 220, 360], [1130, 330, 420], [1150, 330, 560], [1180, 330, 620],
    [1200, 310, 400], [1225, 270, 320], [1270, 240, 300], [1300, 330, 440], [1325, 380, 520], [1350, 430, 620], [1385, 540, 700],
    [1400, 460, 540], [1440, 430, 540], [1480, 480, 620], [1523, 500, 600]
];

function readTrace() {
    return parts.map(part => ({
        smooth: part.smooth,
        points: part.data.split(' ').map(pair => {
            const [x, y] = pair.split(',').map(Number);
            return [(part.x0 + x / part.kx) / 3243, (part.y0 + y / part.ky) / 1725];
        })
    }));
}

function readCore() {
    const part = parts[2];
    const points = [];
    let seed = 7;
    const random = () => (seed = (seed * 16807) % 2147483647) / 2147483647;
    for (let i = 0; i < core.length - 1; i++) {
        const [xa, ta, ba] = core[i];
        const [xb, tb, bb] = core[i + 1];
        for (let x = xa; x < xb; x += 3) {
            const t = (x - xa) / (xb - xa);
            const top = ta + (tb - ta) * t + 40 - random() ** 2 * 130;
            const bottom = ba + (bb - ba) * t - 40 + random() ** 2 * 240;
            for (const [px, py] of [[x, top], [x + 1.5, bottom]]) {
                points.push([(part.x0 + px / part.kx) / 3243, (part.y0 + py / part.ky) / 1725]);
            }
        }
    }
    return points;
}

function add(parent, name, attributes, text) {
    const element = document.createElementNS(svgNS, name);
    for (const key in attributes) {
        element.setAttribute(key, attributes[key]);
    }
    if (text !== undefined) {
        element.textContent = text;
    }
    parent.appendChild(element);
    return element;
}

// Cubic that keeps every peak and dip flat
function smoothPath(p) {
    const slope = i => (p[i + 1][1] - p[i][1]) / (p[i + 1][0] - p[i][0]);
    const tangent = i => {
        if (i === 0) return slope(0);
        if (i === p.length - 1) return slope(i - 1);
        const a = slope(i - 1), b = slope(i);
        return a * b <= 0 ? 0 : 2 * a * b / (a + b);
    };
    let d = '';
    for (let i = 0; i < p.length - 1; i++) {
        const h = (p[i + 1][0] - p[i][0]) / 3;
        d += `C${p[i][0] + h} ${p[i][1] + h * tangent(i)} ${p[i + 1][0] - h} ${p[i + 1][1] - h * tangent(i + 1)} ${p[i + 1][0]} ${p[i + 1][1]}`;
    }
    return d;
}

function tracePath(mapX, mapY) {
    let d = '';
    for (const part of readTrace()) {
        const p = part.points.map(([x, y]) => [mapX(x), mapY(y)]);
        d += (d ? 'L' : 'M') + p[0].join(' ');
        d += part.smooth ? smoothPath(p) : 'L' + p.slice(1).map(q => q.join(' ')).join('L');
    }
    return d;
}

function drawChart() {
    const svg = document.getElementById('chart');
    const width = svg.clientWidth;
    const height = svg.clientHeight;
    const left = margin.left;
    const right = width - margin.right;
    const top = margin.top;
    const bottom = height - margin.bottom;
    const fx = f => left + (right - left) * Math.log(f / fMin) / Math.log(fMax / fMin);
    const dy = db => top + (bottom - top) * (dbTop - db) / (dbTop - dbBottom);
    const vline = (x, color, w) => add(svg, 'path', { d: `M${x} ${top}V${bottom}`, stroke: color, 'stroke-width': w });
    const hline = (y, color, w) => add(svg, 'path', { d: `M${left} ${y}H${right}`, stroke: color, 'stroke-width': w });

    svg.innerHTML = '';

    for (const [name, from, to, color] of bands) {
        const x = Math.max(fx(from), left);
        add(svg, 'rect', { x, y: 5, width: fx(to) - x, height: 19, fill: color, stroke: '#8c8c8c' });
        add(svg, 'text', { x: (fx(from) + fx(to)) / 2, y: 20, class: 'axis-label' }, name);
    }

    add(svg, 'rect', { x: left, y: top, width: right - left, height: bottom - top, fill: '#fff' });

    for (let db = 41; db <= 100; db++) {
        if (db % 5) hline(Math.round(dy(db)), '#e6e6e6', 2);
    }
    for (let f = 11000; f < 22000; f += 1000) {
        vline(Math.round(fx(f)), '#e4e4e4', 2);
    }
    for (let db = 45; db <= 100; db += 5) {
        hline(Math.round(dy(db)), '#cacaca', 2);
        add(svg, 'text', { x: left - 4, y: dy(db) + 6, class: 'axis-label left' }, db);
    }
    for (const decade of [10, 100, 1000]) {
        for (let n = 2; n < 10; n++) {
            const f = decade * n;
            if (f > fMin) vline(Math.round(fx(f)), '#cacaca', 2);
        }
    }
    for (const f of [100, 1000, 10000]) {
        vline(Math.round(fx(f)), '#9c9c9c', 2);
    }
    add(svg, 'rect', { x: left, y: top, width: right - left, height: bottom - top, fill: 'none', stroke: '#c0c0c0', 'stroke-width': 2 });

    const clip = add(svg, 'clipPath', { id: 'plotClip' });
    add(clip, 'rect', { x: left, y: top, width: right - left, height: bottom - top });
    const curves = add(svg, 'g', { 'clip-path': 'url(#plotClip)', class: 'curve' });
    const mapX = x => left + (right - left) * x;
    const mapY = y => top + (bottom - top) * y;
    add(curves, 'path', { d: tracePath(mapX, mapY) });
    add(curves, 'path', { d: 'M' + readCore().map(([x, y]) => mapX(x) + ' ' + mapY(y)).join('L') });

    // cursors
    hline(Math.round(dy(90.9)), '#444', 2);
    add(svg, 'path', { d: `M${Math.round(fx(20000))} ${top}V${bottom + 4}`, stroke: '#444', 'stroke-width': 2 });

    const labelY = bottom + 24;
    const labels = [22, 30, 40, 50, 60, 70, 80, 90, 100, 200, 300, 400, 500, 600, 700, 800, 900];
    for (const f of labels) {
        add(svg, 'text', { x: fx(f), y: labelY, class: 'axis-label' }, f);
    }
    for (const k of [1, 2, 3, 4, 5, 6, 7, 8, 9, 10, 11, 12, 14, 16, 18]) {
        add(svg, 'text', { x: fx(k * 1000) + 1, y: labelY, class: k > 10 ? 'axis-label minor' : 'axis-label' }, k + 'k');
    }
    add(svg, 'text', { x: right - 1, y: labelY, class: 'axis-label' }, '22kHz');
    add(svg, 'rect', { x: fx(20000) - 28, y: bottom + 4, width: 56, height: 25, fill: '#fff', stroke: '#2020f0', 'stroke-width': 2 });
    add(svg, 'text', { x: fx(20000), y: labelY, class: 'axis-label cursor' }, '20,00k');
}

function drawThumbs() {
    for (const id of ['thumbTrace', 'thumbGreen']) {
        const svg = document.getElementById(id);
        const grid = document.createElementNS(svgNS, 'g');
        grid.setAttribute('class', 'thumb-grid');
        for (let y = 12; y < 96; y += 10) {
            add(grid, 'path', { d: `M0 ${y}H146` });
        }
        for (const decade of [10, 100, 1000]) {
            for (let n = 3; n <= 10; n++) {
                const x = 146 * Math.log10(decade * n / 20) / 3;
                add(grid, 'path', { d: `M${x} 0V96` });
            }
        }
        svg.prepend(grid);
    }
    add(document.getElementById('thumbTrace'), 'path', {
        d: tracePath(x => 2 + 142 * x, y => 136 * y - 33)
    });
}

drawThumbs();
drawChart();
window.addEventListener('resize', drawChart);
```
